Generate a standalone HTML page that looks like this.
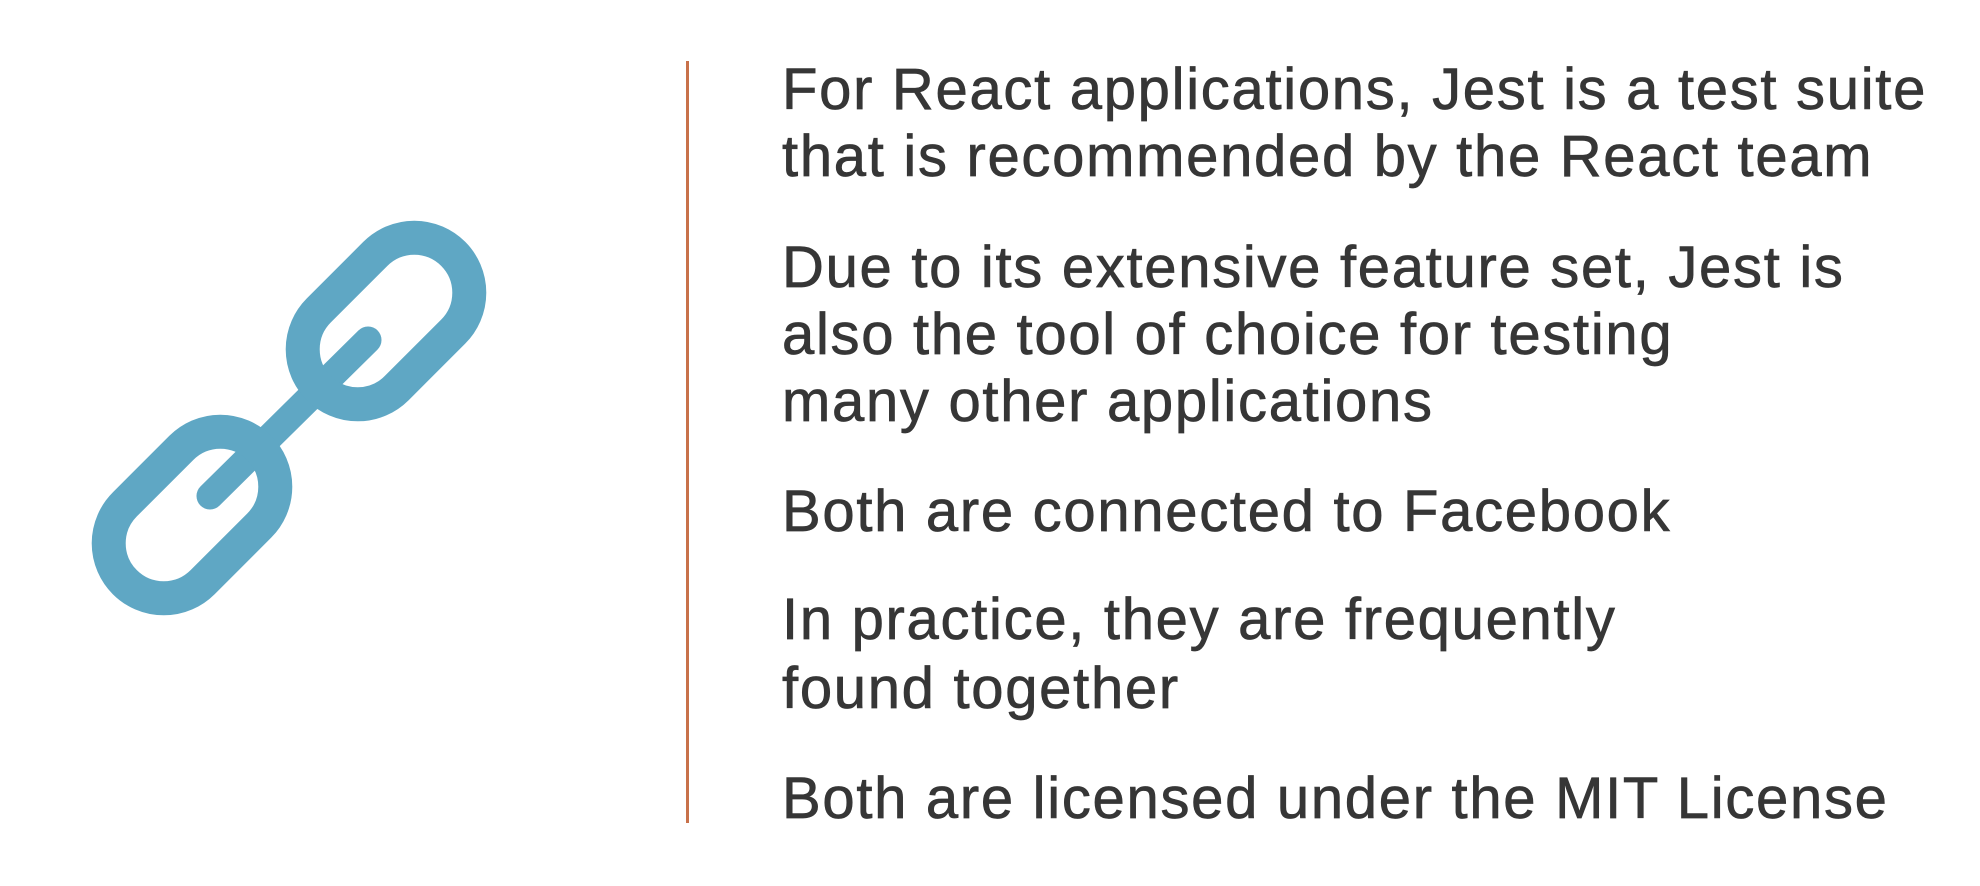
<!DOCTYPE html>
<html><head><meta charset="utf-8"><style>
html,body{margin:0;padding:0;background:#fff;width:1980px;height:886px;overflow:hidden}
.l{position:absolute;left:782px;font-family:"Liberation Sans",sans-serif;font-size:58px;line-height:58px;color:#363636;white-space:nowrap;letter-spacing:1.7px;-webkit-text-stroke:0.7px #363636}
.bar{position:absolute;left:686px;top:61px;width:3px;height:762px;background:#c8714a}
</style></head><body>
<svg width="1980" height="886" style="position:absolute;left:0;top:0">
 <g fill="none" stroke="#5fa7c4" stroke-linecap="round">
  <line x1="210" y1="496" x2="368" y2="340" stroke-width="27"/>
  <rect x="-95" y="-55" width="190" height="110" rx="55" transform="translate(386,321) rotate(-45)" stroke-width="34"/>
  <rect x="-95" y="-55" width="190" height="110" rx="55" transform="translate(192,515) rotate(-45)" stroke-width="34"/>
 </g>
</svg>
<div class="bar"></div>
<div class="l" style="top:61px">For React applications, Jest is a test suite</div>
<div class="l" style="top:128px">that is recommended by the React team</div>
<div class="l" style="top:239px">Due to its extensive feature set, Jest is</div>
<div class="l" style="top:306px">also the tool of choice for testing</div>
<div class="l" style="top:373px">many other applications</div>
<div class="l" style="top:483px">Both are connected to Facebook</div>
<div class="l" style="top:591px">In practice, they are frequently</div>
<div class="l" style="top:660px">found together</div>
<div class="l" style="top:770px">Both are licensed under the MIT License</div>
</body></html>
